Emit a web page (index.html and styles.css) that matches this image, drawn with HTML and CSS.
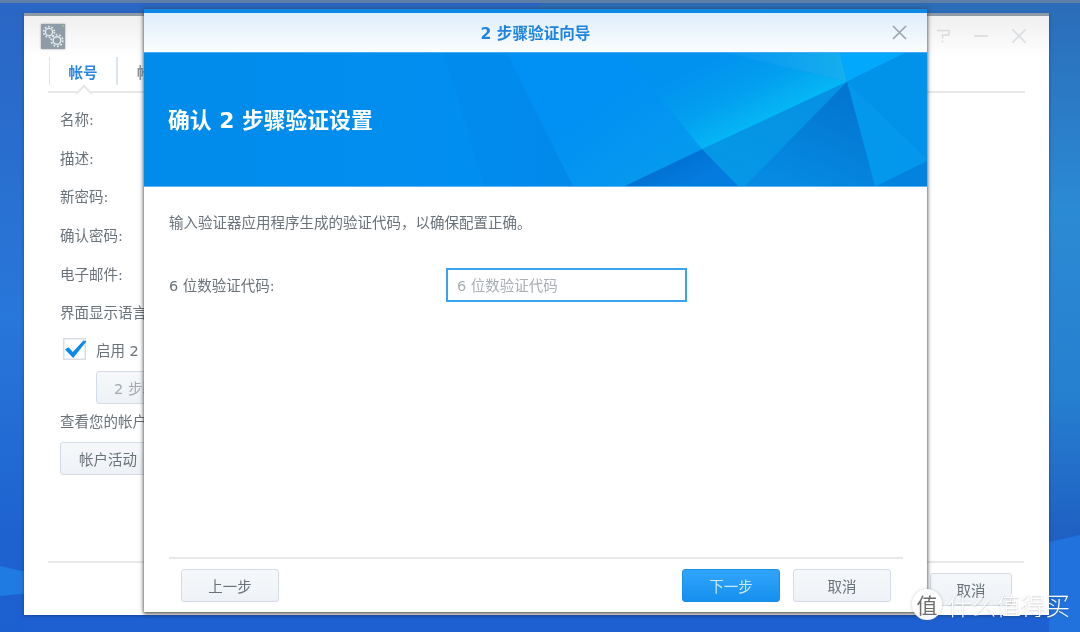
FILE: index.html
```html
<!DOCTYPE html>
<html lang="zh">
<head>
<meta charset="utf-8">
<title>2 步骤验证向导</title>
<link rel="stylesheet" href="styles.css">
</head>
<body>
<div class="desktop">
  <svg class="wallpaper" viewBox="0 0 1080 632" preserveAspectRatio="none" aria-hidden="true">
    <defs>
      <linearGradient id="wallL" x1="0" y1="0" x2="0" y2="1">
        <stop offset="0" stop-color="#2a66c4"/>
        <stop offset="0.5" stop-color="#2877da"/>
        <stop offset="0.85" stop-color="#1e62cf"/>
        <stop offset="1" stop-color="#1c5fd0"/>
      </linearGradient>
      <linearGradient id="wallR" x1="0" y1="0" x2="0" y2="1">
        <stop offset="0" stop-color="#2b6cb8"/>
        <stop offset="0.33" stop-color="#2b8ad4"/>
        <stop offset="0.62" stop-color="#2680d0"/>
        <stop offset="0.85" stop-color="#1f60c2"/>
      </linearGradient>
    </defs>
    <rect width="540" height="632" fill="url(#wallL)"/>
    <rect x="540" width="540" height="632" fill="url(#wallR)"/>
    <polygon points="0,566 40,575 40,592 0,596" fill="#1f7ae2"/>
    <polygon points="24,610 1080,610 1080,632 24,632" fill="#1e60d1"/>
    <polygon points="1049,542 1080,535 1080,632 1049,632" fill="#2272de"/>
    <rect width="1080" height="3" fill="#5f7fa8"/>
  </svg>

  <section class="window back">
    <header class="back-title">
      <svg class="app-icon" viewBox="0 0 24 25" aria-hidden="true">
        <rect width="24" height="25" fill="#8d9ca6"/>
        <g fill="none" stroke="#e6ebee">
          <circle cx="8" cy="8" r="3.6" stroke-width="1.4"/>
          <circle cx="8" cy="8" r="5.4" stroke-width="1.6" stroke-dasharray="1.7 1.7"/>
          <circle cx="16" cy="16.5" r="3.8" stroke-width="1.4"/>
          <circle cx="16" cy="16.5" r="5.8" stroke-width="1.8" stroke-dasharray="1.8 1.8"/>
        </g>
        <rect x="21" y="1" width="2" height="2" fill="#8cc68c"/>
      </svg>
      <div class="back-controls">
        <svg viewBox="0 0 14 14" aria-hidden="true"><path d="M1 1.5h12v4.5H6.5v3.5M6.5 11.5v2" fill="none" stroke="currentColor" stroke-width="1.4"/></svg>
        <svg viewBox="0 0 14 14" aria-hidden="true"><path d="M0 7h14" stroke="currentColor" stroke-width="1.6"/></svg>
        <svg viewBox="0 0 14 14" aria-hidden="true"><path d="M0 0l14 14M14 0L0 14" stroke="currentColor" stroke-width="1.5"/></svg>
      </div>
    </header>
    <nav class="tabs">
      <span class="tab active">帐号</span>
      <span class="tab">帐号</span>
    </nav>
    <div class="back-form">
      <div class="row">名称:</div>
      <div class="row">描述:</div>
      <div class="row">新密码:</div>
      <div class="row">确认密码:</div>
      <div class="row">电子邮件:</div>
      <div class="row">界面显示语言:</div>
      <label class="check-row">
        <svg class="checkbox" viewBox="0 0 23 22" aria-hidden="true">
          <rect x="0.75" y="0.75" width="21.5" height="20.5" fill="#fff" stroke="#d6dfe8" stroke-width="1.5"/>
          <path d="M2 11.5l3.6-2.3 4.2 4.8L20.5 2.5l3 .8L10.2 20z" fill="#0a8be8"/>
        </svg>
        <span>启用 2 步骤验证</span>
      </label>
      <button class="btn indent" type="button">2 步骤验证</button>
      <div class="row activity">查看您的帐户活动:</div>
      <button class="btn activity-btn" type="button">帐户活动</button>
    </div>
    <footer class="back-foot">
      <button class="btn" type="button">取消</button>
    </footer>
  </section>

  <section class="window modal">
    <header class="modal-title">
      <h2>2 步骤验证向导</h2>
      <svg class="modal-close" viewBox="0 0 15 15" aria-hidden="true"><path d="M1 1l13 13M14 1L1 14" stroke="currentColor" stroke-width="1.6"/></svg>
    </header>
    <div class="banner">
      <svg class="banner-art" viewBox="0 0 783 134" preserveAspectRatio="none" aria-hidden="true">
        <defs>
          <linearGradient id="base" gradientUnits="userSpaceOnUse" x1="0" y1="0" x2="480" y2="0">
            <stop offset="0" stop-color="#018bea"/>
            <stop offset="1" stop-color="#0190f3"/>
          </linearGradient>
          <linearGradient id="cyan" gradientUnits="userSpaceOnUse" x1="530" y1="25" x2="565" y2="95">
            <stop offset="0" stop-color="#0192f0"/>
            <stop offset="0.55" stop-color="#039fef"/>
            <stop offset="1" stop-color="#05b6f5"/>
          </linearGradient>
          <linearGradient id="pale" gradientUnits="userSpaceOnUse" x1="583" y1="0" x2="700" y2="0">
            <stop offset="0" stop-color="#0895f1"/>
            <stop offset="1" stop-color="#15aeee"/>
          </linearGradient>
          <linearGradient id="lower" gradientUnits="userSpaceOnUse" x1="440" y1="50" x2="500" y2="134">
            <stop offset="0" stop-color="#0190f3"/>
            <stop offset="1" stop-color="#0599ef"/>
          </linearGradient>
          <linearGradient id="deep" gradientUnits="userSpaceOnUse" x1="520" y1="97" x2="540" y2="134">
            <stop offset="0" stop-color="#016ccf"/>
            <stop offset="1" stop-color="#047bde"/>
          </linearGradient>
          <linearGradient id="mid" gradientUnits="userSpaceOnUse" x1="690" y1="40" x2="650" y2="134">
            <stop offset="0" stop-color="#0376d0"/>
            <stop offset="1" stop-color="#068ae2"/>
          </linearGradient>
          <linearGradient id="edge" gradientUnits="userSpaceOnUse" x1="640" y1="40" x2="600" y2="134">
            <stop offset="0" stop-color="#0692e4"/>
            <stop offset="1" stop-color="#0598e6"/>
          </linearGradient>
          <linearGradient id="left" gradientUnits="userSpaceOnUse" x1="340" y1="0" x2="429" y2="0">
            <stop offset="0" stop-color="#018ced"/>
            <stop offset="1" stop-color="#0289ea"/>
          </linearGradient>
        </defs>
        <rect width="783" height="134" fill="url(#base)"/>
        <polygon points="300,0 363,0 429,134 340,134" fill="url(#left)"/>
        <polygon points="363,0 479,0 558,97 481,134 429,134" fill="url(#lower)"/>
        <polygon points="479,0 583,0 703,29 558,97" fill="url(#cyan)"/>
        <polygon points="583,0 696,0 703,29" fill="url(#pale)"/>
        <polygon points="696,0 761,0 703,29" fill="#02a8fb"/>
        <polygon points="761,0 783,0 783,107 703,29" fill="#0193ea"/>
        <polygon points="703,29 783,107 783,109 731,134" fill="#0398ec"/>
        <polygon points="783,109 783,134 733,134" fill="#0382de"/>
        <polygon points="558,97 703,29 601,134 594,134" fill="url(#edge)"/>
        <polygon points="558,97 594,134 481,134" fill="url(#deep)"/>
        <polygon points="703,29 731,134 601,134" fill="url(#mid)"/>
      </svg>
      <h1>确认 2 步骤验证设置</h1>
    </div>
    <div class="modal-body">
      <p class="intro">输入验证器应用程序生成的验证代码，以确保配置正确。</p>
      <div class="field">
        <label for="code">6 位数验证代码:</label>
        <input id="code" class="code-input" type="text" placeholder="6 位数验证代码">
      </div>
    </div>
    <footer class="modal-foot">
      <button class="btn wide" type="button">上一步</button>
      <div class="foot-right">
        <button class="btn wide primary" type="button">下一步</button>
        <button class="btn wide" type="button">取消</button>
      </div>
    </footer>
  </section>

  <div class="watermark">
    <span class="wm-badge">值</span>
    <span class="wm-text">什么值得买</span>
  </div>
</div>
</body>
</html>
```

FILE: styles.css
```css
* { box-sizing: border-box; }
html, body { margin: 0; padding: 0; }
body {
  width: 1080px;
  height: 632px;
  overflow: hidden;
  font-family: "DejaVu Sans", "Noto Sans CJK SC", sans-serif;
  font-size: 14.5px;
  color: #6a7279;
}
.desktop {
  position: relative;
  width: 1080px;
  height: 632px;
  overflow: hidden;
  filter: blur(0.4px);
}
.wallpaper { position: absolute; inset: 0; width: 100%; height: 100%; }

.window {
  position: absolute;
  display: flex;
  flex-direction: column;
  background: #fff;
}

/* background window */
.back {
  left: 24px;
  top: 13px;
  width: 1025px;
  height: 602px;
  border-top: 3px solid #8e9aa5;
  box-shadow: 0 1px 3px rgba(20, 50, 110, .6);
}
.back-title {
  height: 41px;
  flex: none;
  display: flex;
  justify-content: space-between;
  padding: 8px 23px 0 17px;
  background: linear-gradient(#efefef, #fff);
}
.app-icon { width: 24px; height: 25px; box-shadow: 0 0 2px rgba(0, 0, 0, .35); }
.back-controls { display: flex; gap: 24px; color: #d8dbde; padding-top: 5px; }
.back-controls svg { width: 14px; height: 14px; }
.tabs {
  height: 36px;
  flex: none;
  margin: 0 24px;
  padding-left: 1px;
  display: flex;
  border-bottom: 2px solid #e6e8ea;
}
.tab {
  width: 68px;
  height: 28px;
  display: flex;
  align-items: center;
  justify-content: center;
  font-weight: 700;
  color: #8b939a;
  border-left: 1px solid #dbe5f0;
}
.tab.active { color: #2a86e2; border-right: 1px solid #dbe5f0; position: relative; }
.tab.active::after {
  content: "";
  position: absolute;
  left: 28px;
  top: 30px;
  width: 10px;
  height: 10px;
  background: #fff;
  border-left: 2px solid #e6e8ea;
  border-top: 2px solid #e6e8ea;
  transform: rotate(45deg);
}
.back-form {
  flex: 1;
  padding: 6.5px 0 0 36px;
  display: flex;
  flex-direction: column;
  align-items: flex-start;
}
.row { height: 38.6px; display: flex; align-items: center; flex: none; }
.check-row { height: 36px; display: flex; align-items: center; gap: 10px; margin-left: 3px; flex: none; }
.checkbox { width: 23px; height: 22px; overflow: visible; }
.row.activity { height: 32px; }
.back-foot {
  flex: none;
  height: 54px;
  margin: 0 25px 0 24px;
  padding: 10px 12px 0 0;
  border-top: 2px solid #e6e8ea;
  display: flex;
  justify-content: flex-end;
}
.btn {
  font: inherit;
  color: #6a7279;
  height: 33px;
  width: 82px;
  padding: 0;
  flex: none;
  border: 1.5px solid #d3dce6;
  border-radius: 3px;
  background: linear-gradient(#f6f8fb, #eef2f6);
}
.btn.indent { width: 108px; margin: 4px 0 0 36px; color: #a3aab0; }
.btn.activity-btn { width: 96px; margin-top: 6px; }
.btn.wide { width: 98px; }
.btn.primary {
  color: #cfe9fc;
  border-color: #1b8fe6;
  background: linear-gradient(#31a5fb, #1590ef);
}

/* wizard */
.modal {
  left: 144px;
  top: 9px;
  width: 783px;
  height: 603px;
  border-top: 4px solid #0a8ae6;
  box-shadow: 0 0 4px 1px rgba(70, 70, 70, .55), 0 2px 3px rgba(60, 60, 60, .6);
}
.modal-title {
  flex: none;
  height: 40px;
  position: relative;
  display: flex;
  align-items: center;
  justify-content: center;
  background: linear-gradient(#deedfb, #fbfdfe);
  border-bottom: 1px solid #49acf3;
}
.modal-title h2 {
  margin: 0 0 1px;
  font-size: 15.6px;
  font-weight: 700;
  color: #1f84e0;
}
.modal-close {
  position: absolute;
  right: 20px;
  top: 12px;
  width: 15px;
  height: 15px;
  color: #9aa3aa;
}
.banner {
  flex: none;
  position: relative;
  height: 134px;
  display: flex;
  align-items: center;
  padding: 0 0 3px 24px;
  border-bottom: 1px solid #5cb6f4;
}
.banner-art { position: absolute; inset: 0; width: 100%; height: 100%; }
.banner h1 {
  position: relative;
  margin: 0;
  font-size: 21.8px;
  font-weight: 700;
  color: #fff;
}
.modal-body { flex: 1; padding: 26px 24px 0 25px; }
.intro { margin: 0; line-height: 20px; }
.field {
  margin-top: 35px;
  display: flex;
  align-items: center;
}
.field label { width: 277px; flex: none; margin-bottom: 2px; }
.code-input {
  width: 241px;
  height: 34px;
  padding: 1px 9px 0;
  font: inherit;
  color: #6a7279;
  border: 2px solid #3aa2ee;
  outline: none;
  background: #fff;
}
.code-input::placeholder { color: #a8afb5; opacity: 1; }
.modal-foot {
  flex: none;
  height: 55px;
  margin: 0 24px 0 25px;
  padding: 10px 12px 0;
  border-top: 2px solid #e6e8ea;
  display: flex;
  justify-content: space-between;
}
.foot-right { display: flex; gap: 13px; }

/* watermark */
.watermark {
  position: absolute;
  left: 912px;
  top: 589px;
  display: flex;
  align-items: center;
  gap: 5px;
  color: #fff;
}
.wm-badge {
  width: 30px;
  height: 31px;
  border-radius: 50%;
  background: rgba(255, 255, 255, .96);
  box-shadow: 0 0 3px rgba(90, 90, 90, .35);
  color: #6d6d6d;
  font-size: 21px;
  font-weight: 400;
  line-height: 31px;
  text-align: center;
  font-family: "Noto Sans CJK SC", sans-serif;
}
.wm-text {
  font-family: "Noto Sans CJK SC", sans-serif;
  font-size: 24.6px;
  line-height: 31px;
  font-weight: 300;
  text-shadow: 0 1px 2px rgba(70, 70, 70, .3);
}
```
